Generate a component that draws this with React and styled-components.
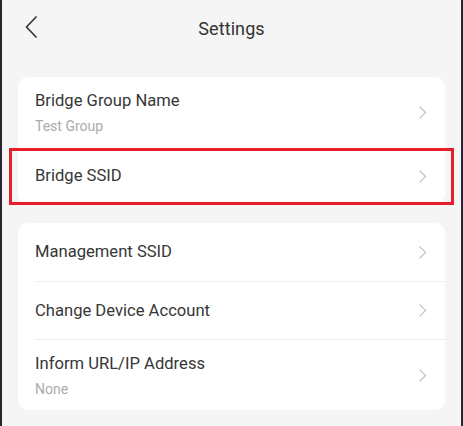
import React from "react";
import styled, { createGlobalStyle } from "styled-components";

const GlobalStyle = createGlobalStyle`
  html, body {
    margin: 0;
    padding: 0;
    background: #f5f5f5;
  }
  body {
    font-family: Roboto, "Noto Sans", "Liberation Sans", sans-serif;
  }
`;

const Screen = styled.div`
  box-sizing: border-box;
  width: 463px;
  height: 426px;
  background: #f5f5f5;
  border-left: 2px solid #2a2432;
  border-right: 2px solid #2a2432;
  padding: 0 16px;
  overflow: hidden;
`;

const Header = styled.div`
  position: relative;
  height: 57px;
  display: flex;
  align-items: center;
  justify-content: center;
`;

const BackButton = styled.button`
  position: absolute;
  left: 6px;
  top: 15px;
  background: none;
  border: none;
  padding: 0;
  width: 16px;
  height: 24px;
  display: flex;
`;

const Title = styled.h1`
  margin: 0;
  font-size: 18px;
  font-weight: 400;
  color: #333;
  letter-spacing: 0.1px;
`;

const Card = styled.div`
  background: #fff;
  border-radius: 10px;
  margin-top: ${(p) => p.$top}px;
`;

const Row = styled.div`
  position: relative;
  display: flex;
  align-items: center;
  height: ${(p) => p.$h}px;
  padding-left: 17px;
  padding-right: 18px;
`;

const Divider = styled.div`
  height: 1px;
  background: #efefef;
  margin-left: 17px;
`;

const Texts = styled.div`
  flex: 1;
  display: flex;
  flex-direction: column;
`;

const Label = styled.div`
  font-size: 16.6px;
  color: #363636;
  line-height: 20px;
`;

const Sub = styled.div`
  font-size: 14px;
  color: #ababab;
  line-height: 16px;
  margin-top: 7px;
`;

const Highlight = styled.div`
  position: absolute;
  left: -9px;
  right: -9px;
  top: 0;
  bottom: -1px;
  border: 3px solid #e61e28;
  pointer-events: none;
`;

const Chevron = () => (
  <svg width="9" height="15" viewBox="0 0 9 15" fill="none">
    <path d="M1.5 1.5 L7.5 7.5 L1.5 13.5" stroke="#c6c6c6" strokeWidth="1.3" />
  </svg>
);

const Item = ({ label, sub, h, highlight }) => (
  <Row $h={h}>
    <Texts>
      <Label>{label}</Label>
      {sub && <Sub>{sub}</Sub>}
    </Texts>
    <Chevron />
    {highlight && <Highlight />}
  </Row>
);

const App = () => {
  return (
    <>
      <GlobalStyle />
      <Screen>
        <Header>
          <BackButton>
            <svg width="16" height="24" viewBox="0 0 16 24" fill="none">
              <path d="M12.5 1.5 L2.5 12 L12.5 22.5" stroke="#333" strokeWidth="1.6" />
            </svg>
          </BackButton>
          <Title>Settings</Title>
        </Header>
        <Card $top={20}>
          <Item label="Bridge Group Name" sub="Test Group" h={71} />
          <Item label="Bridge SSID" h={56} highlight />
        </Card>
        <Card $top={19}>
          <Item label="Management SSID" h={58} />
          <Divider />
          <Item label="Change Device Account" h={57} />
          <Divider />
          <Item label="Inform URL/IP Address" sub="None" h={70} />
        </Card>
      </Screen>
    </>
  );
};

export default App;
